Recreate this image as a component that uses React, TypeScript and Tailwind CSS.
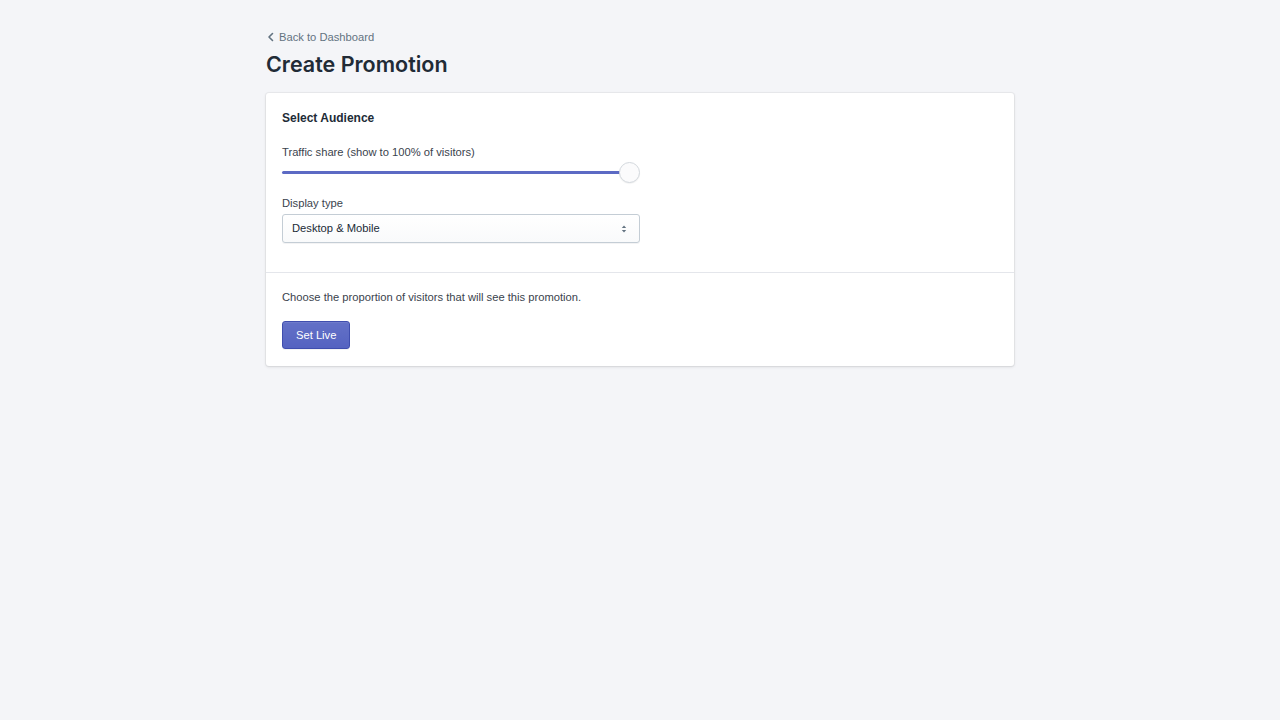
import { useState } from 'react';

const ChevronLeft = () => (
    <svg width="12" height="12" viewBox="0 0 12 12" fill="none" className="mr-[2px] -ml-[1px]">
        <path d="M7.5 2.5L4 6l3.5 3.5" stroke="#637381" strokeWidth="1.6" strokeLinecap="round" strokeLinejoin="round" />
    </svg>
);

const SelectArrows = () => (
    <svg width="8" height="10" viewBox="0 0 8 10" fill="#637381">
        <path d="M4 1.5L6.2 4H1.8z" />
        <path d="M4 8.5L1.8 6h4.4z" />
    </svg>
);

export default function App() {
    const [share] = useState(100);
    const [display, setDisplay] = useState('Desktop & Mobile');

    return (
        <div className="min-h-screen bg-[#f4f5f8] font-['Liberation_Sans',Arial,sans-serif] text-[#212b36]">
            <div className="w-[748px] mx-auto pt-[27px]">
                {/* Breadcrumb */}
                <a href="#" className="flex items-center h-5 text-[11.2px] text-[#637381] leading-5">
                    <ChevronLeft />
                    Back to Dashboard
                </a>
                <h1 className="mt-[3px] font-['Inter',sans-serif] text-[21.5px] leading-7 font-semibold text-[#212b36]">Create Promotion</h1>

                {/* Card */}
                <div className="mt-[15px] bg-white rounded-[3px] shadow-[0_0_0_1px_rgba(63,63,68,0.05),0_1px_3px_0_rgba(63,63,68,0.15)]">
                    <div className="px-4 pt-[15px] pb-[29px] border-b border-[#e4e6eb]">
                        <h2 className="text-[12px] leading-5 font-semibold text-[#212b36]">Select Audience</h2>

                        <div className="mt-[14px] w-[358px]">
                            <label className="block text-[11.2px] leading-5 text-[#3a434d]">
                                Traffic share (show to {share}% of visitors)
                            </label>
                            <div className="relative h-[21px] flex items-center">
                                <div className="h-[3px] -mt-[1px] rounded-full bg-[#5c6ac4]" style={{ width: `calc(${share}% - 10px)` }} />
                                <div className="absolute right-0 top-0 w-[21px] h-[21px] rounded-full bg-[#fbfbfc] border border-[#d3d8dd] shadow-[0_1px_1px_rgba(0,0,0,0.05)]" />
                            </div>

                            <label className="block mt-[10px] text-[11.2px] leading-5 text-[#3a434d]">Display type</label>
                            <div className="relative mt-[1px]">
                                <select
                                    value={display}
                                    onChange={(e) => setDisplay(e.target.value)}
                                    className="appearance-none block w-full h-[29px] pl-[9px] pr-8 text-[11.2px] text-[#212b36] rounded-[3px] border border-[#c4cdd5] bg-gradient-to-b from-white to-[#f9fafb] shadow-[0_1px_0_rgba(22,29,37,0.05)] outline-none"
                                >
                                    <option>Desktop & Mobile</option>
                                    <option>Desktop only</option>
                                    <option>Mobile only</option>
                                </select>
                                <span className="absolute right-[12px] top-1/2 -translate-y-1/2 pointer-events-none flex">
                                    <SelectArrows />
                                </span>
                            </div>
                        </div>
                    </div>

                    <div className="px-4 pt-[14px] pb-[17px]">
                        <p className="text-[11.2px] leading-5 text-[#3a434d]">Choose the proportion of visitors that will see this promotion.</p>
                        <button className="mt-[14px] h-[28px] px-[13px] text-[11.2px] text-white rounded-[3px] border border-[#3f4eae] bg-gradient-to-b from-[#6371c7] to-[#5563c1] shadow-[inset_0_1px_0_0_#6f7bcb,0_1px_0_0_rgba(22,29,37,0.05)]">
                            Set Live
                        </button>
                    </div>
                </div>
            </div>
        </div>
    );
}
